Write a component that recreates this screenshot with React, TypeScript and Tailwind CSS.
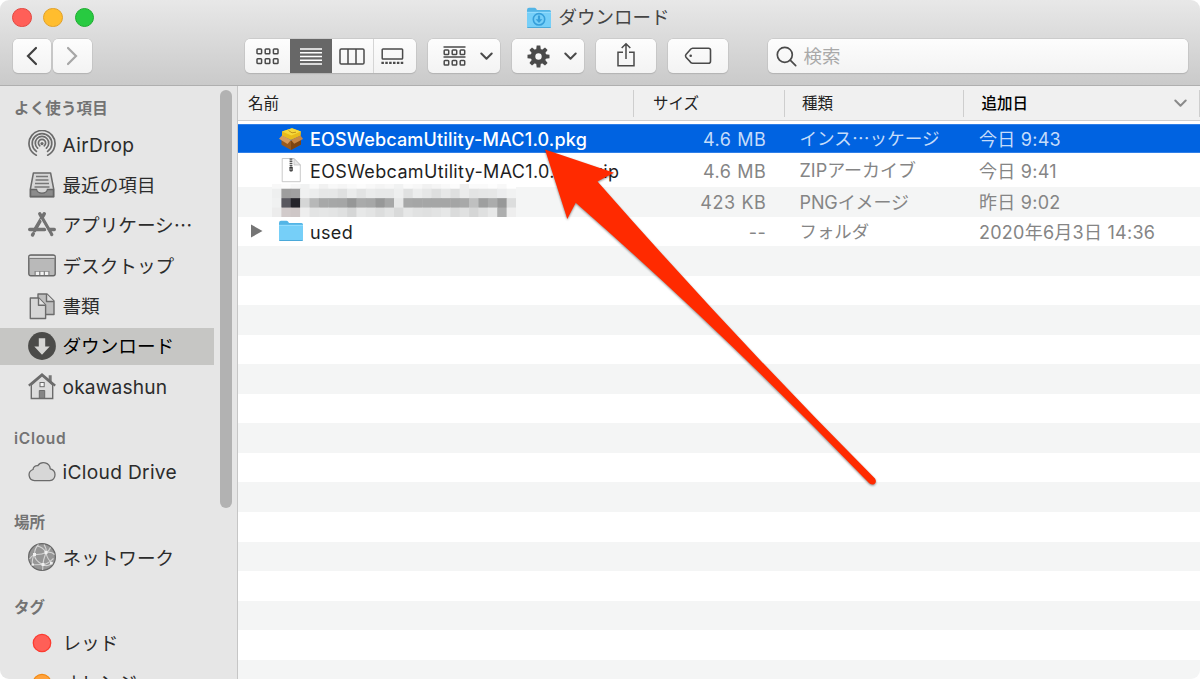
import React from 'react';

type IconProps = { children: React.ReactNode; className?: string };

const SideIcon: React.FC<IconProps> = ({ children, className = '' }) => (
  <svg width="28" height="28" viewBox="0 0 28 28" fill="none" className={`shrink-0 ${className}`}>
    {children}
  </svg>
);

const AirDropIcon = () => (
  <SideIcon>
    <g stroke="#6b6b6b" strokeWidth="1.7" strokeLinecap="round">
      <path d="M8.3 25.2A13 13 0 1 1 19.7 25.2" />
      <path d="M8.4 21.4A9.8 9.8 0 1 1 19.6 21.4" />
      <path d="M9.6 18.2A6.7 6.7 0 1 1 18.4 18.2" />
      <path d="M11.8 15.8A3.6 3.6 0 1 1 16.2 15.8" />
    </g>
    <circle cx="14" cy="13.6" r="1.6" fill="#6b6b6b" />
  </SideIcon>
);

const RecentsIcon = () => (
  <SideIcon>
    <path d="M5.4 2h17.2l3.2 16.5v7.2H2.3v-7.2z" fill="#d6d6d6" stroke="#6b6b6b" strokeWidth="1.5" strokeLinejoin="round" />
    <path d="M8 5.5h12M7.5 9h13M7 12.5h14M6.5 16h15" stroke="#777" strokeWidth="1.3" />
    <path d="M2.6 18.5h6c.5 3 2.7 3.6 5.4 3.6s4.9-.6 5.4-3.6h6v7H2.6z" fill="#8c8c8c" stroke="#666" strokeWidth="1.3" />
  </SideIcon>
);

const ApplicationsIcon = () => (
  <SideIcon>
    <g stroke="#727272" strokeLinecap="round">
      <path d="M16.2 2.8L6.5 19.5" strokeWidth="3.6" />
      <path d="M11.8 2.8L23.7 23.5" strokeWidth="3.4" />
      <path d="M1.7 18.5h15M21 18.5h5.3" strokeWidth="3.4" />
      <path d="M5.3 22.7l-.8 1.3" strokeWidth="3.4" />
    </g>
    <path d="M12.6 8l9.3 16" stroke="#e6e6e6" strokeWidth=".8" />
  </SideIcon>
);

const DesktopIcon = () => (
  <SideIcon>
    <rect x=".8" y="4" width="26.4" height="20.8" rx="2" fill="#b9b9b9" stroke="#666" strokeWidth="1.4" />
    <path d="M1.5 6h25" stroke="#f1f1f1" strokeWidth="1.4" />
    <path d="M1.5 7.4h25" stroke="#777" strokeWidth="1" />
    <rect x="6.5" y="20" width="15" height="4.2" fill="#858585" />
    <path d="M7.8 20.7h3.3v3.2H7.8zM12.4 20.7h3.3v3.2h-3.3zM17 20.7h3.3v3.2H17z" fill="#f2f2f2" />
  </SideIcon>
);

const DocumentsIcon = () => (
  <SideIcon>
    <g stroke="#6b6b6b" strokeWidth="1.4" strokeLinejoin="round">
      <path d="M10 2h9l7 7v13.5H10z" fill="#bebebe" />
      <path d="M18.5 2v7.5H26" fill="#ddd" />
      <path d="M2.3 6h8.5l6.8 7v13.5H2.3z" fill="#d6d6d6" />
      <path d="M10.5 6v7.3h7" fill="#e4e4e4" />
    </g>
  </SideIcon>
);

const DownloadsIcon = () => (
  <SideIcon>
    <circle cx="14" cy="14" r="13.9" fill="#4b4b49" />
    <path d="M10.8 6.3h6.4v8.2h4.5L14 22.8l-7.7-8.3h4.5z" fill="#d6d6d4" />
  </SideIcon>
);

const HomeIcon = () => (
  <SideIcon>
    <path d="M3.3 12v13.5h21.4V12L14 2.8z" fill="#dcdcdc" stroke="#6b6b6b" strokeWidth="1.4" />
    <path d="M20.7 2.2h3v7l-3-2.5z" fill="#777" />
    <path d="M.8 12.6L14 1.5l13.2 11.1" stroke="#6b6b6b" strokeWidth="2.2" />
    <rect x="12" y="9.5" width="4.2" height="4.2" fill="#f7f7f7" stroke="#6b6b6b" strokeWidth="1" />
    <path d="M11.3 25.2v-7.7h5.4v7.7z" fill="#858585" stroke="#6b6b6b" />
  </SideIcon>
);

const CloudIcon = () => (
  <SideIcon>
    <path
      d="M6.5 22.6A5.7 5.7 0 0 1 5 11.5 4.2 4.2 0 0 1 9.8 7.7 6.9 6.9 0 0 1 22.3 10.8 6 6 0 0 1 21.8 22.6z"
      fill="#d7d7d7"
      stroke="#6b6b6b"
      strokeWidth="1.3"
    />
  </SideIcon>
);

const NetworkIcon = () => (
  <SideIcon>
    <circle cx="14" cy="14" r="13.4" fill="#969696" stroke="#686868" strokeWidth="1.2" />
    <g stroke="#d4d4d4" strokeWidth="1.1">
      <path d="M1.5 16C4 12 7 11.5 9 11.5s6-.5 9-2 4-3.5 4.5-5" />
      <path d="M16 1.5c2 3 2.5 5.5 2 8S15.500 15 15 21s0 4.500-.5 6" />
      <path d="M10.500 1.500C7 5 6.500 9 6.500 11.500s2 7 8 10 7.500-.5 10.500-2" />
      <path d="M3 22c4-.5 8-.5 12-.5 5 0 8-4 10.500-6" />
      <path d="M18 9.500c1 6 4 9 6.500 10.500M9 3c4 .5 7 3 9 6.500M18 9.500c4-1 6.500 0 8.500 2M6.500 11.500C4 15 4 18 4.500 22" />
    </g>
    <path d="M5 10h3v3H5zM16.500 8h3v3h-3zM13.500 20h3v3h-3zM22 19h2.500v2.500H22zM4 20.500h2v2H4z" fill="#eee" />
  </SideIcon>
);

const TagDot: React.FC<{ fill: string; stroke: string }> = ({ fill, stroke }) => (
  <SideIcon>
    <circle cx="14" cy="14" r="8.7" fill={fill} stroke={stroke} strokeWidth="1.3" />
  </SideIcon>
);

const FolderIcon: React.FC<{ download?: boolean }> = ({ download }) => (
  <svg width="26" height="22" viewBox="0 0 26 22" className="shrink-0">
    <path d="M1 3Q1 .8 3 .8h5.500q1 0 1.700 1l.8 1.200h12.500q1.500 0 1.500 1.500V10H1z" fill="#53b5e6" />
    <path d="M1 5h24v14.500q0 1.200-1.200 1.200H2.200Q1 20.700 1 19.500z" fill="#76cff8" />
    <path d="M1 5.300h24" stroke="#a5e2ff" strokeWidth=".8" />
    <path d="M1.300 20.500h23.400" stroke="#4ba9d9" strokeWidth="1" />
    {download && (
      <g fill="none" stroke="#369fda" strokeWidth="1.6">
        <circle cx="13" cy="12.3" r="5.7" />
        <path d="M13 8.5v5" strokeWidth="2.2" />
        <path d="M9.600 12.300h6.800L13 16z" fill="#369fda" stroke="none" />
      </g>
    )}
  </svg>
);

const PackageIcon = () => (
  <svg width="26" height="24" viewBox="0 0 26 24" className="shrink-0">
    <path d="M3.500 9L13 14l10-5v8.500L13 23l-9.500-5.200z" fill="#9a5a1e" />
    <path d="M13 14l10-5v8.500L13 23z" fill="#7d4412" />
    <path d="M4 4.500L14 1.300l9 3.200-.3 4.300L13 13 4 9z" fill="#e9bb1c" />
    <path d="M4 4.500L14 1.300l9 3.200-9.500 4z" fill="#f6d83b" />
    <path d="M10.500 3.500l3.500 2.300 4-.6" stroke="#c3951a" fill="none" />
    <path d="M4 8.500l9 4.500-3.500 4L1 11.800z" fill="#d99c5c" />
    <path d="M22.500 8.500L13 13l3.200 3.800L25 12z" fill="#c98746" />
  </svg>
);

const ZipIcon = () => (
  <svg width="26" height="26" viewBox="0 0 26 26" className="shrink-0">
    <path d="M4.200 1.500h11.800l6.300 6.500v16.700H4.200z" fill="#fff" stroke="#c4c4c4" strokeWidth=".9" />
    <path d="M16 1.500V8h6.300z" fill="#e8e8e8" stroke="#bcbcbc" strokeWidth=".7" />
    <path d="M13 1.500v10" stroke="#555" strokeWidth="2.8" strokeDasharray="1.3 .8" />
    <rect x="11.5" y="9.5" width="3.2" height="5" rx="1.2" fill="#333" />
    <path d="M13 11.300v2" stroke="#ddd" strokeWidth=".9" />
  </svg>
);

const Chevron: React.FC<{ className?: string }> = ({ className = '' }) => (
  <svg width="13" height="9" viewBox="0 0 13 9" fill="none" className={className}>
    <path d="M1.300 1.500l5.200 5.300 5.200-5.300" stroke="currentColor" strokeWidth="2" strokeLinecap="round" strokeLinejoin="round" />
  </svg>
);

// pixelated file name, one list per row of blocks
const mosaic = [
  ['#f8f8f8', '#fcfcfc', '#f7f7f7', '#f1f2f2', '#fafafa', '#f1f1f1', '#f8f8f8', '#f5f5f5', '#f9f9f9', '#fcfcfc', '#f8f8f8', '#f4f4f4', '#f7f7f7', '#f1f2f2', '#fafafa', '#f7f7f7', '#f1f1f1', '#f5f5f5', '#f9f9f9', '#fcfcfc', '#eeeeee', '#fafafa', '#fafafa', '#fdfdfd', '#f8f8f8', '#fff'],
  ['#eeefef', '#9e9e9e', '#a0a0a1', '#f0f1f1', '#eceded', '#e6e7e7', '#e6e7e7', '#dfe0e0', '#ebecec', '#e2e3e3', '#eaebeb', '#e7e8e8', '#e7e8e8', '#eeefef', '#e0e1e1', '#eceded', '#e6e7e7', '#dedfdf', '#e7e8e8', '#dedfdf', '#ebecec', '#e3e4e4', '#e5e6e6', '#e6e7e7', '#ecedee', '#f1f2f2'],
  ['#f0f1f1', '#59585f', '#25242b', '#d5d6d6', '#b7b8b8', '#a7a8a8', '#a6a7a7', '#a5a6a6', '#969797', '#a9aaaa', '#a6a7a7', '#979898', '#a6a7a7', '#e7e8e8', '#a7a8a8', '#a5a6a6', '#a5a6a6', '#a5a6a6', '#a5a6a6', '#a4a5a5', '#a8a9a9', '#bfc0c0', '#9e9f9f', '#abacac', '#979898', '#dcdddd'],
  ['#ececec', '#d1caca', '#cec7c7', '#eeeeee', '#e3e4e4', '#e5e6e6', '#e3e4e4', '#dfe0e0', '#d5d6d6', '#e7e8e8', '#e3e4e4', '#dcdddd', '#e3e4e4', '#d9dada', '#e6e7e7', '#e1e2e2', '#dfe0e0', '#e2e3e3', '#e6e7e7', '#dadbdb', '#e0e1e1', '#d5d6d6', '#dfe0e0', '#e7e8e8', '#adaeae', '#eeeeee'],
];

const Mosaic = () => (
  <svg width="244" height="33" viewBox="0 0.5 26 3.5" preserveAspectRatio="none" className="shrink-0">
    {mosaic.map((row, y) => row.map((color, x) => <rect key={`${x}-${y}`} x={x} y={y} width="1.05" height="1.05" fill={color} />))}
  </svg>
);

const favorites = [
  { icon: AirDropIcon, label: 'AirDrop', font: 'text-[19.2px] tracking-[0.35px]' },
  { icon: RecentsIcon, label: '最近の項目' },
  { icon: ApplicationsIcon, label: 'アプリケーシ…' },
  { icon: DesktopIcon, label: 'デスクトップ' },
  { icon: DocumentsIcon, label: '書類' },
  { icon: DownloadsIcon, label: 'ダウンロード', active: true },
  { icon: HomeIcon, label: 'okawashun', font: 'text-[19.2px] tracking-[0.15px]' },
];

const jp = "mb-[2.5px] text-[18.6px] font-['Noto_Sans_CJK_JP',sans-serif]";

const SideItem: React.FC<{ icon: React.ReactNode; label: string; active?: boolean; font?: string }> = ({
  icon,
  label,
  active,
  font = jp,
}) => (
  <div className="h-[40.4px] flex items-center">
    <div className={`w-[213.5px] h-[37px] pl-7 flex items-center gap-[6.5px] ${active ? 'bg-[#c6c6c4] text-black' : 'text-[#2c2c2c]'}`}>
      {icon}
      <span className={`pt-px leading-6 whitespace-nowrap ${font}`}>{label}</span>
    </div>
  </div>
);

const SideHeading: React.FC<{ children: React.ReactNode; className: string }> = ({ children, className }) => (
  <div className={`pl-3.5 flex items-center text-[15.5px] font-semibold text-[#737373] ${className}`}>{children}</div>
);

const button = 'h-[34px] rounded-[5px] bg-gradient-to-b from-[#fdfdfd] to-[#f3f3f3] shadow-[0_0_0_0.5px_#bdbdbd,0_1px_1px_#aaa] flex items-center';

const Toolbar = () => (
  <header className="h-[86px] shrink-0 bg-gradient-to-b from-[#e8e8e8] to-[#cacaca] border-b-[1.5px] border-[#afafaf]">
    <div className="h-[39px] relative flex justify-center">
      <div className="absolute left-3 top-[7.5px] flex gap-[11.8px]">
        <span className="w-[19.5px] h-[19.5px] rounded-full bg-[#ff5f58] border border-[#e2463f]" />
        <span className="w-[19.5px] h-[19.5px] rounded-full bg-[#ffbd2e] border border-[#e0a028]" />
        <span className="w-[19.5px] h-[19.5px] rounded-full bg-[#28ca41] border border-[#1dac2f]" />
      </div>
      <div className="h-[35px] flex items-center gap-1.5 pr-1 text-[18.5px] text-[#454545]">
        <FolderIcon download />
        <span className="pt-px">ダウンロード</span>
      </div>
    </div>

    <div className="pl-[12.5px] pr-3 flex text-[#4a4a4a]">
      <div className="flex gap-[2px]">
        <div className={`${button} w-[38.5px] justify-center`}>
          <svg width="12" height="20" viewBox="0 0 12 20" fill="none">
            <path d="M10 2L2 10l8 8" stroke="#404040" strokeWidth="2.2" strokeLinecap="round" />
          </svg>
        </div>
        <div className={`${button} w-[38.5px] justify-center`}>
          <svg width="12" height="20" viewBox="0 0 12 20" fill="none">
            <path d="M2 2l8 8-8 8" stroke="#a6a6a6" strokeWidth="2.2" strokeLinecap="round" />
          </svg>
        </div>
      </div>

      <div className={`${button} ml-[153px] w-[171.5px] overflow-hidden`}>
        <div className="w-[45.5px] pl-px flex justify-center">
          <svg width="23" height="17" viewBox="0 0 23 17" fill="none" stroke="currentColor" strokeWidth="1.5">
            {[1, 9.2, 17.4].map((x) => [1, 10.7].map((y) => <rect key={`${x}-${y}`} x={x} y={y} width="4.6" height="4.8" rx=".8" />))}
          </svg>
        </div>
        <div className="w-[42px] h-full bg-[#676767] flex justify-center items-center">
          <svg width="22" height="17" viewBox="0 0 22 17" stroke="#fff" strokeWidth="1.4">
            <path d="M0 1h22M0 4.800h22M0 8.500h22M0 12.200h22M0 16h22" />
          </svg>
        </div>
        <div className="w-[41.5px] h-full border-r border-[#d5d5d5] flex justify-center items-center">
          <svg width="26" height="17" viewBox="0 0 26 17" fill="none" stroke="currentColor" strokeWidth="1.5">
            <rect x="1" y="1" width="24" height="15" rx="1.3" />
            <path d="M9 1v15M17 1v15" />
          </svg>
        </div>
        <div className="flex-1 pr-[4px] flex justify-center">
          <svg width="23" height="17" viewBox="0 0 23 17" fill="none" stroke="currentColor" strokeWidth="1.5">
            <rect x="1.2" y="1" width="20.4" height="10" rx=".8" />
            <path d="M.4 14.900h22" strokeWidth="2.3" strokeDasharray="2.5 1.37" />
          </svg>
        </div>
      </div>

      <div className={`${button} ml-3 w-[72px] pl-[15px]`}>
        <svg width="23" height="22" viewBox="0 0 23 22" fill="none" stroke="currentColor" strokeWidth="1.5" className="mt-px">
          <path d="M.5 1h22M.5 11h22" />
          {[1.2, 9.2, 17.2].map((x) => [4, 14.5].map((y) => <rect key={`${x}-${y}`} x={x} y={y} width="4.5" height="4.5" rx=".8" />))}
        </svg>
        <Chevron className="ml-[13.5px]" />
      </div>

      <div className={`${button} ml-3 w-[72px] pl-[15px]`}>
        <svg width="23" height="23" viewBox="-11.5 -11.5 23 23">
          <circle r="5.5" fill="none" stroke="currentColor" strokeWidth="4.6" />
          <g fill="currentColor">
            {[0, 45, 90, 135, 180, 225, 270, 315].map((angle) => (
              <path key={angle} d="M-2.300-7L-1.800-11h3.600L2.300-7z" transform={`rotate(${angle})`} />
            ))}
          </g>
        </svg>
        <Chevron className="ml-[13.5px]" />
      </div>

      <div className={`${button} ml-[11.5px] w-[60px] justify-center`}>
        <svg width="20" height="26" viewBox="0 0 20 26" fill="none" stroke="currentColor" strokeWidth="1.5" className="mb-0.5">
          <path d="M7 10.300H2v13.500h16V10.300h-5M10 17V2M5.700 6L10 1.700 14.300 6" />
        </svg>
      </div>

      <div className={`${button} ml-3 w-[60px] justify-center`}>
        <svg width="28" height="18" viewBox="0 0 28 18" fill="none" stroke="currentColor" strokeWidth="1.6">
          <path d="M8.500 1.300h16q2 0 2 2v11q0 2-2 2h-16Q7 16.300 5.500 14L2 10.200q-1-1.400 0-2.800L5.500 3.500Q7 1.300 8.500 1.300z" />
          <circle cx="6.7" cy="8.8" r="1.3" fill="currentColor" stroke="none" />
        </svg>
      </div>

      <div className={`${button} ml-10 flex-1 pl-2 gap-[7px] text-[18.5px] text-[#a9a9a9]`}>
        <svg width="21" height="21" viewBox="0 0 21 21" fill="none" stroke="#4a4a4a" strokeWidth="1.7">
          <circle cx="8.8" cy="8.8" r="7.5" />
          <path d="M14.200 14.200l5.500 5.500" strokeLinecap="round" />
        </svg>
        <span className="pt-[2px]">検索</span>
      </div>
    </div>
  </header>
);

const Sidebar = () => (
  <aside className="w-[238px] shrink-0 bg-[#e6e6e6] border-r border-[#c6c6c6] flex overflow-hidden">
    <div className="w-[219.5px] shrink-0 h-0">
      <SideHeading className="h-[38px] pt-[7px] tracking-[0.15px]">よく使う項目</SideHeading>
      {favorites.map((item) => (
        <SideItem key={item.label} icon={<item.icon />} label={item.label} active={item.active} font={item.font} />
      ))}
      <SideHeading className="h-[45px] pt-[18px] tracking-[0.7px]">iCloud</SideHeading>
      <SideItem icon={<CloudIcon />} label="iCloud Drive" font="text-[19.2px] tracking-[0.3px]" />
      <SideHeading className="h-[45px] pt-[15px]">場所</SideHeading>
      <SideItem icon={<NetworkIcon />} label="ネットワーク" />
      <SideHeading className="h-[45px] pt-[15px]">タグ</SideHeading>
      <SideItem icon={<TagDot fill="#ff5f57" stroke="#fc3b30" />} label="レッド" />
      <SideItem icon={<TagDot fill="#ffa23c" stroke="#f28a13" />} label="オレンジ" />
    </div>
    <div className="w-3 h-[418px] mt-[4px] rounded-full bg-[#b2b2b2]" />
  </aside>
);

const files = [
  {
    name: 'EOSWebcamUtility-MAC1.0.pkg',
    icon: <PackageIcon />,
    size: '4.6 MB',
    kind: 'インス…ッケージ',
    date: '今日 9:43',
    row: 'h-[29px] mt-[3px] bg-[#0063e1] text-white border-y border-[#2f7fe8]',
    title: 'font-medium tracking-[0.18px]',
    meta: 'text-[#c5dcfa]',
    kindFont: "text-[17.6px] font-['Noto_Sans_CJK_JP',sans-serif] pb-px",
  },
  {
    name: 'EOSWebcamUtility-MAC1.0.pkg.zip',
    icon: <ZipIcon />,
    size: '4.6 MB',
    kind: 'ZIPアーカイブ',
    date: '今日 9:41',
    row: 'h-[34px] text-[#1f1f1f]',
    title: 'tracking-[0.35px]',
    meta: 'text-[#858585]',
    kindFont: 'pt-[2px]',
  },
  {
    size: '423 KB',
    kind: 'PNGイメージ',
    date: '昨日 9:02',
    row: 'h-[29.7px] bg-[#f4f5f5]',
    meta: 'text-[#858585]',
    kindFont: 'pt-[2px] tracking-[-0.1px]',
  },
  {
    name: 'used',
    icon: <FolderIcon />,
    size: '--',
    kind: 'フォルダ',
    date: '2020年6月3日 14:36',
    row: 'h-[29.3px] text-[#1f1f1f]',
    title: 'tracking-[0.35px]',
    meta: 'text-[#858585]',
    kindFont: 'pt-[2px] text-[17.4px]',
    folder: true,
  },
];

const FileList = () => (
  <main className="flex-1 min-w-0 flex flex-col bg-white">
    <div className="h-[35px] shrink-0 bg-[#f0f0f0] border-b border-[#d0d0d0] flex items-center text-[15.5px] text-[#222]">
      <div className="w-[395.5px] h-[27px] border-r border-[#cecece] pl-[10px] pt-px flex items-center">名前</div>
      <div className="w-[151px] h-[27px] border-r border-[#cecece] pl-[19.5px] pt-px flex items-center">サイズ</div>
      <div className="w-[179.5px] h-[27px] border-r border-[#cecece] pl-[17.5px] pt-px flex items-center">種類</div>
      <div className="flex-1 h-[27px] border-r border-[#cecece] pl-[17.5px] pr-3 pt-px flex items-center justify-between font-medium text-black">
        追加日
        <Chevron className="text-[#8a8a8a]" />
      </div>
    </div>

    {files.map((file) => (
      <div key={file.date} className={`shrink-0 flex items-center text-[18px] leading-6 whitespace-nowrap ${file.row}`}>
        {file.name ? (
          <div className="w-[395.5px] pl-[13px] flex items-center">
            <span className="w-[27px]">
              {file.folder && (
                <svg width="12" height="14" viewBox="0 0 12 14">
                  <path d="M0 .5v13L11.500 7z" fill="#757575" />
                </svg>
              )}
            </span>
            {file.icon}
            <span className={`ml-[6px] pt-[3px] ${file.title}`}>{file.name}</span>
          </div>
        ) : (
          <div className="w-[395.5px] h-[29.7px] pl-[34px] flex items-end">
            <Mosaic />
          </div>
        )}
        <div className={`w-[133px] pt-[3px] text-right tracking-[0.6px] ${file.meta}`}>{file.size}</div>
        <div className={`w-[180px] pl-[33px] ${file.kindFont} ${file.meta}`}>{file.kind}</div>
        <div className={`flex-1 pl-[32.5px] pt-[3px] tracking-[0.25px] ${file.meta}`}>{file.date}</div>
      </div>
    ))}

    <div className="flex-1 bg-[repeating-linear-gradient(to_bottom,#f4f5f5_0px,#f4f5f5_29.55px,#ffffff_29.55px,#ffffff_59.1px)]" />
  </main>
);

const App: React.FC = () => (
  <div className="bg-white">
    <div className="relative w-[1200px] h-[679px] rounded-[9px] overflow-hidden flex flex-col font-[Inter,'Noto_Sans_CJK_JP',sans-serif]">
      <Toolbar />
      <div className="flex-1 min-h-0 flex">
        <Sidebar />
        <FileList />
      </div>

      {/* Arrow pointing at the installer package */}
      <svg width="1200" height="679" viewBox="0 0 1200 679" className="absolute inset-0 pointer-events-none drop-shadow-[0_1px_1px_rgba(0,0,0,0.45)]">
        <path
          d="M545 149.500L614 172.700 597.500 181.500Q735 338 875 478.500Q877 482 874.500 484Q871 485.500 868.500 482.500Q723 332 575.700 202.700L567.300 219z"
          fill="#ff2a00"
        />
      </svg>
    </div>
  </div>
);

export default App;
